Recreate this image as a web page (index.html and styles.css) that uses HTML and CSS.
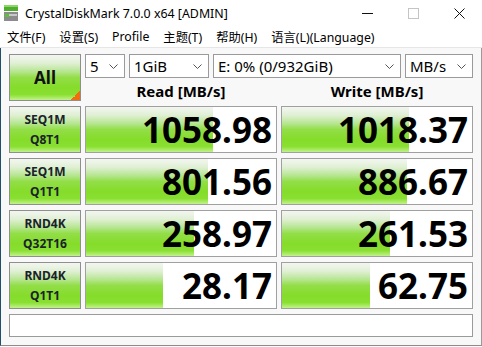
FILE: index.html
```html
<!DOCTYPE html>
<html lang="zh-CN">
<head>
    <meta charset="UTF-8">
    <title>CrystalDiskMark 7.0.0 x64 [ADMIN]</title>
    <link rel="stylesheet" href="styles.css">
</head>
<body>

    <div class="titlebar">
        <svg class="app-icon" width="15" height="16" viewBox="0 0 15 16">
            <rect x="0" y="0" width="14" height="6" fill="#4fae2e"/>
            <rect x="0" y="0" width="14" height="2" fill="#8fd66a"/>
            <rect x="0" y="7" width="14" height="9" fill="#8c8c8c"/>
            <rect x="1" y="9" width="12" height="2" fill="#c8c8c8"/>
            <rect x="1" y="9" width="4" height="3" fill="#5cc23a"/>
        </svg>
        <span class="title">CrystalDiskMark 7.0.0 x64 [ADMIN]</span>
        <div class="win-controls">
            <div class="ctl">
                <svg width="11" height="11" viewBox="0 0 11 11"><line x1="0" y1="5.5" x2="11" y2="5.5" stroke="#111" stroke-width="1"/></svg>
            </div>
            <div class="ctl">
                <svg width="11" height="11" viewBox="0 0 11 11"><rect x="0.5" y="0.5" width="10" height="10" fill="none" stroke="#c4c4c4" stroke-width="1"/></svg>
            </div>
            <div class="ctl">
                <svg width="11" height="11" viewBox="0 0 11 11"><path d="M0.5 0.5 L10.5 10.5 M10.5 0.5 L0.5 10.5" stroke="#111" stroke-width="1"/></svg>
            </div>
        </div>
    </div>

    <div class="menubar">
        <span class="menu-item">文件(F)</span>
        <span class="menu-item">设置(S)</span>
        <span class="menu-item">Profile</span>
        <span class="menu-item">主题(T)</span>
        <span class="menu-item">帮助(H)</span>
        <span class="menu-item">语言(L)(Language)</span>
    </div>

    <div class="client">
        <div class="board">
            <div class="all-btn">All</div>

            <div class="top-area">
                <div class="selects">
                    <div class="select sel-count"><span>5</span><svg class="chev" width="9" height="5" viewBox="0 0 9 5"><polyline points="0.5,0.5 4.5,4.5 8.5,0.5" fill="none" stroke="#555"/></svg></div>
                    <div class="select sel-size"><span>1GiB</span><svg class="chev" width="9" height="5" viewBox="0 0 9 5"><polyline points="0.5,0.5 4.5,4.5 8.5,0.5" fill="none" stroke="#555"/></svg></div>
                    <div class="select sel-drive"><span>E: 0% (0/932GiB)</span><svg class="chev" width="9" height="5" viewBox="0 0 9 5"><polyline points="0.5,0.5 4.5,4.5 8.5,0.5" fill="none" stroke="#555"/></svg></div>
                    <div class="select sel-unit"><span>MB/s</span><svg class="chev" width="9" height="5" viewBox="0 0 9 5"><polyline points="0.5,0.5 4.5,4.5 8.5,0.5" fill="none" stroke="#555"/></svg></div>
                </div>
                <div class="heads">
                    <div class="head">Read [MB/s]</div>
                    <div class="head">Write [MB/s]</div>
                </div>
            </div>

            <div class="label">SEQ1M<br>Q8T1</div>
            <div class="value"><div class="bar" style="width: 127px"></div><span class="num">1058.98</span></div>
            <div class="value"><div class="bar" style="width: 127px"></div><span class="num">1018.37</span></div>

            <div class="label">SEQ1M<br>Q1T1</div>
            <div class="value"><div class="bar" style="width: 122px"></div><span class="num">801.56</span></div>
            <div class="value"><div class="bar" style="width: 125px"></div><span class="num">886.67</span></div>

            <div class="label">RND4K<br>Q32T16</div>
            <div class="value"><div class="bar" style="width: 108px"></div><span class="num">258.97</span></div>
            <div class="value"><div class="bar" style="width: 108px"></div><span class="num">261.53</span></div>

            <div class="label">RND4K<br>Q1T1</div>
            <div class="value"><div class="bar" style="width: 77px"></div><span class="num">28.17</span></div>
            <div class="value"><div class="bar" style="width: 88px"></div><span class="num">62.75</span></div>

            <div class="comment"></div>
        </div>
    </div>

</body>
</html>
```

FILE: styles.css
```css
* {
    margin: 0;
    padding: 0;
    box-sizing: border-box;
}

body {
    background: #fff;
    color: #000;
    font-family: "Noto Sans", "Noto Sans CJK SC", sans-serif;
    width: 482px;
    height: 347px;
    overflow: hidden;
}

.titlebar {
    height: 26px;
    display: flex;
    align-items: center;
    padding-left: 4px;
    font-size: 12.4px;
}

.app-icon {
    margin-right: 6px;
    margin-top: -1px;
}

.title {
    flex: 1;
}

.win-controls {
    display: flex;
    align-self: stretch;
}

.ctl {
    width: 46px;
    display: flex;
    align-items: center;
    justify-content: center;
}

.menubar {
    height: 22px;
    display: flex;
    align-items: center;
    font-size: 12.3px;
    padding-left: 0;
    border-bottom: 1px solid #e6e6e6;
}

.menu-item {
    padding: 0 7px;
}

.client {
    height: 298px;
    background: #f8f8f8;
    border-left: 1px solid #1f4f6c;
    border-right: 1px solid #9a9a9a;
    border-bottom: 1px solid #8c8c8c;
    padding: 6px 0 0 8px;
}

.board {
    display: grid;
    grid-template-columns: 72px 192px 192px;
    grid-template-rows: 47px repeat(4, 47px) 23px;
    column-gap: 4px;
    row-gap: 5px;
}

/* green gradient shared by buttons and bars */
.all-btn,
.label,
.bar {
    background: linear-gradient(to bottom, #f3f6f1 0%, #e0f0d4 18%, #b8e694 36%, #92de48 50%, #86dc2a 72%, #8ae032 88%, #c2f28c 100%);
}

.all-btn {
    position: relative;
    border: 1px solid #8f8f8f;
    display: flex;
    align-items: center;
    justify-content: center;
    font-size: 17px;
    font-weight: 700;
    color: #111;
}

.all-btn::after {
    content: "";
    position: absolute;
    right: 0;
    bottom: 0;
    width: 9px;
    height: 9px;
    background: linear-gradient(135deg, transparent 50%, #f26d0d 50%);
}

.top-area {
    grid-column: 2 / 4;
    display: flex;
    flex-direction: column;
}

.selects {
    display: flex;
    gap: 4px;
    height: 25px;
}

.select {
    background: #fff;
    border: 1px solid #9a9a9a;
    display: flex;
    align-items: center;
    justify-content: space-between;
    padding: 0 6px 0 4px;
    font-size: 15px;
}

.sel-count { width: 40px; }
.sel-size { width: 80px; }
.sel-drive { width: 188px; }
.sel-unit { width: 68px; }

.heads {
    display: grid;
    grid-template-columns: 192px 192px;
    column-gap: 4px;
    padding-top: 3px;
}

.head {
    text-align: center;
    font-size: 15px;
    font-weight: 700;
    line-height: 20px;
}

.label {
    border: 1px solid #8f8f8f;
    display: flex;
    align-items: center;
    justify-content: center;
    text-align: center;
    font-size: 12px;
    font-weight: 700;
    line-height: 20px;
    color: #1a222c;
}

.value {
    border: 1px solid #a0a0a0;
    background: #fff;
    display: grid;
}

.bar {
    grid-area: 1 / 1;
    justify-self: start;
}

.num {
    grid-area: 1 / 1;
    justify-self: end;
    align-self: center;
    font-size: 35px;
    font-weight: 700;
    line-height: 1;
    padding-right: 4px;
}

.comment {
    grid-column: 1 / 4;
    background: #fff;
    border: 1px solid #9a9a9a;
}
```
